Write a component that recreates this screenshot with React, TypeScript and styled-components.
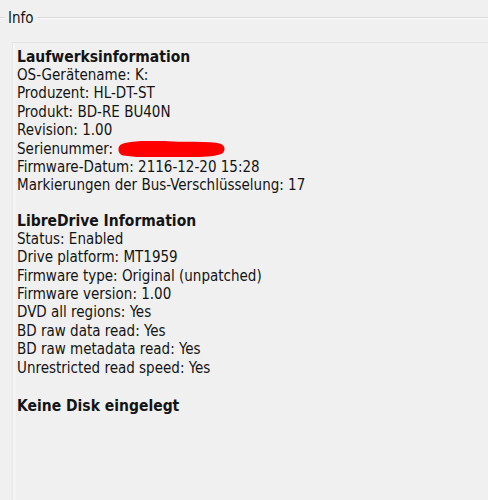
import styled, {createGlobalStyle} from "styled-components";

const GlobalStyle = createGlobalStyle`
  html, body {
    margin: 0;
    padding: 0;
    background: #f0f0f0;
  }
  body {
    width: 488px;
    height: 500px;
    overflow: hidden;
    font-family: "DejaVu Sans Condensed", "DejaVu Sans", "Liberation Sans", sans-serif;
    color: #141414;
  }
`

const GroupBox = styled.div`
  position: relative;
  width: 100%;
  height: 500px;
  padding-top: 17px;
  box-sizing: border-box;
`

const Frame = styled.div`
  height: 100%;
  border-top: 1px solid #d9d9d9;
  box-shadow: inset 0 1px 0 #fbfbfb;
  padding: 24px 0 0 12px;
  box-sizing: border-box;
`

const Legend = styled.div`
  position: absolute;
  top: 10px;
  left: 5px;
  padding: 0 3px;
  background: #f0f0f0;
  font-size: 15px;
  line-height: 17px;
`

const Panel = styled.div`
  height: 100%;
  border-top: 1px solid #e4e4e4;
  border-left: 1px solid #e6e6e6;
  box-shadow: inset 2px 0 0 #f6f6f6;
  padding: 6px 0 0 4px;
  box-sizing: border-box;
`

const Section = styled.div<{ gap: number }>`
  margin-bottom: ${({gap}) => gap}px;
`

const Heading = styled.div`
  font-weight: bold;
  font-size: 15.5px;
  line-height: 17px;
`

const Line = styled.div`
  font-size: 15px;
  line-height: 18.4px;
  white-space: nowrap;
`

const Redacted = styled.svg`
  vertical-align: -3px;
  margin-left: 1px;
`

type Row = [string, string]

const drive: Row[] = [
  ["OS-Gerätename", "K:"],
  ["Produzent", "HL-DT-ST"],
  ["Produkt", "BD-RE BU40N"],
  ["Revision", "1.00"],
  ["Serienummer", ""],
  ["Firmware-Datum", "2116-12-20 15:28"],
  ["Markierungen der Bus-Verschlüsselung", "17"],
]

const libre: Row[] = [
  ["Status", "Enabled"],
  ["Drive platform", "MT1959"],
  ["Firmware type", "Original (unpatched)"],
  ["Firmware version", "1.00"],
  ["DVD all regions", "Yes"],
  ["BD raw data read", "Yes"],
  ["BD raw metadata read", "Yes"],
  ["Unrestricted read speed", "Yes"],
]

function Scribble() {
  return (
    <Redacted width="108" height="16" viewBox="0 0 108 16">
      <path
        d="M6 8 C20 4 40 5 55 6 C70 7 90 5 101 8 C92 12 70 10 55 11 C38 12 20 11 6 9"
        fill="none"
        stroke="#ff0000"
        strokeWidth="11"
        strokeLinecap="round"
        strokeLinejoin="round"
      />
    </Redacted>
  )
}

function Rows({rows}: { rows: Row[] }) {
  return (
    <>
      {rows.map(([label, value]) => (
        <Line key={label}>
          {label}: {label === "Serienummer" ? <Scribble/> : value}
        </Line>
      ))}
    </>
  )
}

export default function App(): JSX.Element {
  return (
    <>
      <GlobalStyle/>
      <GroupBox>
        <Legend>Info</Legend>
        <Frame>
          <Panel>
            <Section gap={18}>
              <Heading>Laufwerksinformation</Heading>
              <Rows rows={drive}/>
            </Section>
            <Section gap={21}>
              <Heading>LibreDrive Information</Heading>
              <Rows rows={libre}/>
            </Section>
            <Heading>Keine Disk eingelegt</Heading>
          </Panel>
        </Frame>
      </GroupBox>
    </>
  )
}
